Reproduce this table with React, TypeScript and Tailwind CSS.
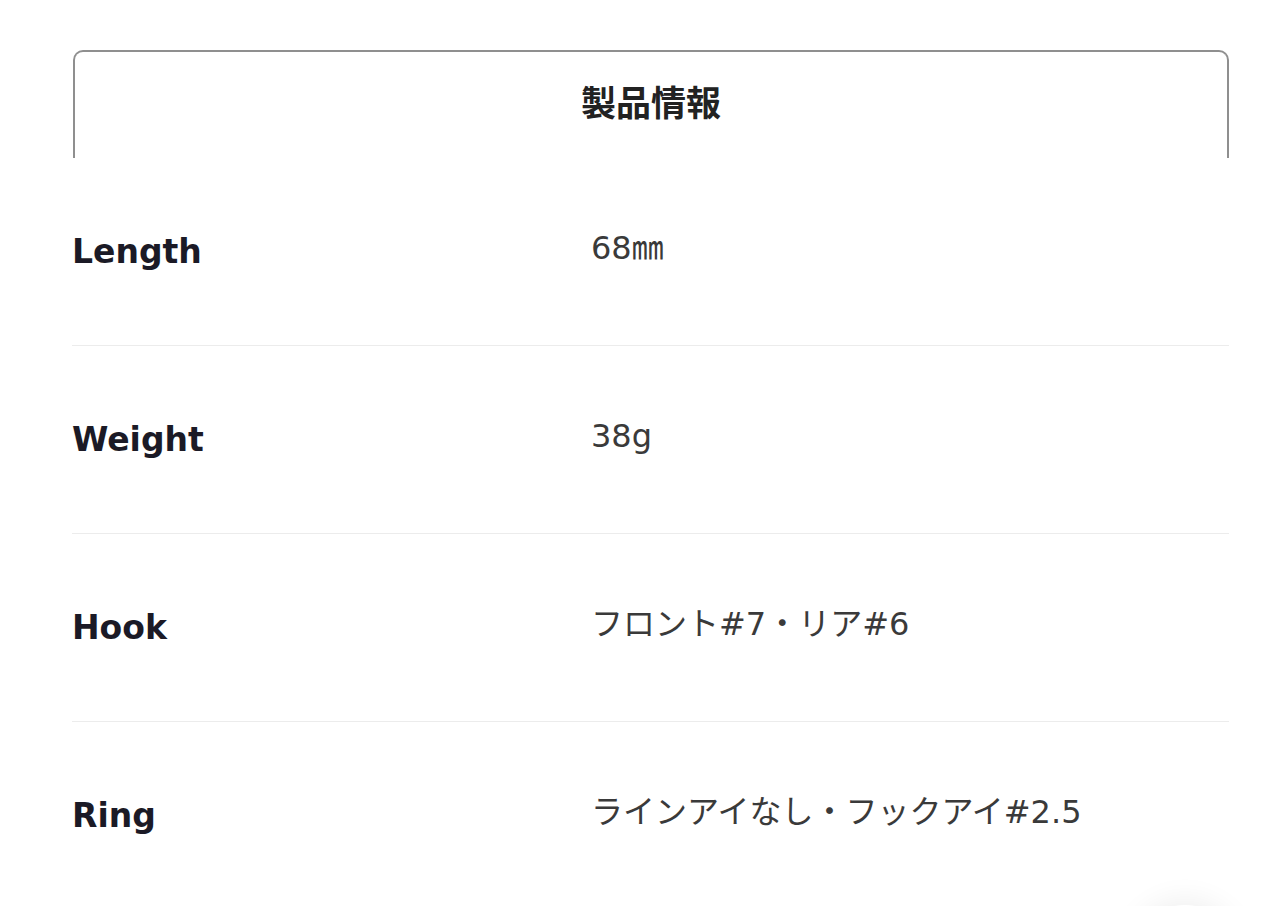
const specs = [
  { label: "Length", value: "68㎜" },
  { label: "Weight", value: "38g" },
  { label: "Hook", value: "フロント#7・リア#6" },
  { label: "Ring", value: "ラインアイなし・フックアイ#2.5" },
];

function SpecRow({ label, value, last }: { label: string; value: string; last?: boolean }) {
  return (
    <div
      className={
        "grid grid-cols-[519px_1fr] items-center h-[188px] " +
        (last ? "" : "border-b border-[#ececec]")
      }
    >
      <div className="font-['DejaVu_Sans',sans-serif] font-bold text-[33px] text-[#1b1a26]">{label}</div>
      <div className="font-['DejaVu_Sans','Noto_Sans_CJK_JP',sans-serif] text-[32px] text-[#3a3a3a] pb-2">{value}</div>
    </div>
  );
}

export default function App() {
  return (
    <main className="relative h-[906px] overflow-hidden bg-white pl-[72px] pr-[51px] pt-[50px]">
      <section className="ml-px h-[108px] border-2 border-b-0 border-[#8f8f8f] rounded-t-[10px] flex items-center justify-center pb-2">
        <h2 className="font-['Noto_Sans_CJK_JP',sans-serif] font-bold text-[35px] text-[#222]">製品情報</h2>
      </section>
      <section className="flex flex-col">
        {specs.map((s, i) => (
          <SpecRow key={s.label} label={s.label} value={s.value} last={i === specs.length - 1} />
        ))}
      </section>
      <div className="absolute left-[1130px] top-[905px] w-[110px] h-[110px] rounded-full bg-white shadow-[0_-4px_30px_rgba(0,0,0,0.07)]" />
    </main>
  );
}
